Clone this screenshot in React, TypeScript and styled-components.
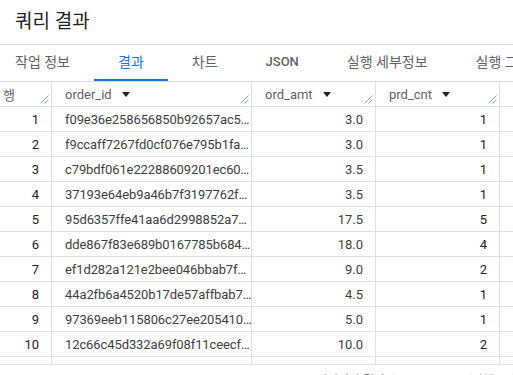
import React from "react";
import styled, { createGlobalStyle } from "styled-components";

const Global = createGlobalStyle`
  html, body { margin: 0; padding: 0; background: #fff; }
  body {
    width: 513px; height: 375px; overflow: hidden;
    font-family: Roboto, "Noto Sans CJK KR", "Noto Sans", sans-serif;
    color: #202124;
  }
`;

const Page = styled.div`
  display: flex;
  flex-direction: column;
  width: 513px;
`;

const TitleBar = styled.div`
  display: flex;
  align-items: center;
  height: 38px;
  padding: 0 0 6px 15px;
  border-bottom: 1px solid #dadce0;
`;

const Title = styled.h1`
  margin: 0;
  font-size: 19px;
  font-weight: 400;
  color: #202124;
  font-family: Roboto, "Noto Sans CJK KR", sans-serif;
`;

const TabStrip = styled.div`
  display: flex;
  height: 36px;
  border-bottom: 1px solid #dadce0;
  margin-left: -9px;
  white-space: nowrap;
  overflow: hidden;
`;

const Tab = styled.div<{ $active?: boolean; $latin?: boolean }>`
  position: relative;
  display: flex;
  align-items: center;
  padding: 0 24px 4px;
  font-size: ${(p) => (p.$latin ? 13 : 14)}px;
  font-weight: ${(p) => (p.$latin ? 500 : 400)};
  color: ${(p) => (p.$active ? "#1a73e8" : "#5f6368")};
  flex-shrink: 0;
  &::after {
    content: "";
    position: absolute;
    left: 0;
    right: 0;
    bottom: 0;
    height: 2px;
    background: ${(p) => (p.$active ? "#1a73e8" : "transparent")};
  }
`;

const Grid = styled.div`
  display: flex;
  flex-direction: column;
`;

const Row = styled.div<{ $h: number }>`
  display: grid;
  grid-template-columns: 52px 200px 124px 124px 1fr;
  height: ${(p) => p.$h}px;
  border-bottom: 1px solid #e0e0e0;
`;

const HeadCell = styled.div<{ $pad?: number }>`
  position: relative;
  display: flex;
  align-items: center;
  gap: 10px;
  padding-left: ${(p) => p.$pad ?? 13}px;
  font-size: 13px;
  color: #5f6368;
  border-right: 1px solid #e0e0e0;
  overflow: hidden;
`;

const Cell = styled.div<{ $align?: "left" | "right"; $num?: boolean }>`
  display: flex;
  align-items: center;
  min-width: 0;
  justify-content: ${(p) => (p.$align === "right" ? "flex-end" : "flex-start")};
  padding: ${(p) => (p.$align === "right" ? "0 12px 0 0" : "0 0 0 13px")};
  font-size: 13px;
  letter-spacing: ${(p) => (p.$align === "right" ? "0" : "-0.1px")};
  color: ${(p) => (p.$num ? "#202124" : "#3c4043")};
  border-right: 1px solid #e0e0e0;
  white-space: nowrap;
  overflow: hidden;
`;

const Filler = styled.div``;

const Handle = styled.svg`
  position: absolute;
  right: 2px;
  bottom: 2px;
`;

const Footer = styled.div`
  padding: 8px 0 0 316px;
  font-size: 12px;
  line-height: 16px;
  color: #5f6368;
  white-space: nowrap;
`;

const ResizeHandle = () => (
  <Handle width="9" height="9" viewBox="0 0 9 9">
    <line x1="8.5" y1="0.5" x2="0.5" y2="8.5" stroke="#80868b" strokeWidth="0.8" />
    <line x1="8.5" y1="4.5" x2="4.5" y2="8.5" stroke="#80868b" strokeWidth="0.8" />
  </Handle>
);

const SortArrow = () => (
  <svg width="8" height="5" viewBox="0 0 8 5">
    <polygon points="0,0 8,0 4,5" fill="#202124" />
  </svg>
);

const rows = [
  ["f09e36e258656850b92657ac5…", "3.0", "1"],
  ["f9ccaff7267fd0cf076e795b1fa…", "3.0", "1"],
  ["c79bdf061e22288609201ec60…", "3.5", "1"],
  ["37193e64eb9a46b7f3197762f…", "3.5", "1"],
  ["95d6357ffe41aa6d2998852a7…", "17.5", "5"],
  ["dde867f83e689b0167785b684…", "18.0", "4"],
  ["ef1d282a121e2bee046bbab7f…", "9.0", "2"],
  ["44a2fb6a4520b17de57affbab7…", "4.5", "1"],
  ["97369eeb115806c27ee205410…", "5.0", "1"],
  ["12c66c45d332a69f08f11ceecf…", "10.0", "2"],
];

export default function App() {
  return (
    <>
      <Global />
      <Page>
        <TitleBar>
          <Title>쿼리 결과</Title>
        </TitleBar>
        <TabStrip>
          <Tab>작업 정보</Tab>
          <Tab $active>결과</Tab>
          <Tab>차트</Tab>
          <Tab $latin>JSON</Tab>
          <Tab>실행 세부정보</Tab>
          <Tab>실행 그래프</Tab>
        </TabStrip>
        <Grid>
          <Row $h={24}>
            <HeadCell $pad={3}>
              행
              <ResizeHandle />
            </HeadCell>
            <HeadCell>
              order_id <SortArrow />
              <ResizeHandle />
            </HeadCell>
            <HeadCell>
              ord_amt <SortArrow />
              <ResizeHandle />
            </HeadCell>
            <HeadCell>
              prd_cnt <SortArrow />
              <ResizeHandle />
            </HeadCell>
            <Filler />
          </Row>
          {rows.map((r, i) => (
            <Row $h={24} key={i}>
              <Cell $align="right" $num>
                {i + 1}
              </Cell>
              <Cell>{r[0]}</Cell>
              <Cell $align="right">{r[1]}</Cell>
              <Cell $align="right" $num>{r[2]}</Cell>
              <Filler />
            </Row>
          ))}
          <Row $h={7}>
            <Cell />
            <Cell />
            <Cell />
            <Cell />
            <Filler />
          </Row>
        </Grid>
        <Footer>페이지당 결과 수: 50 ▾ 1 – 10 (전체 10행)</Footer>
      </Page>
    </>
  );
}
